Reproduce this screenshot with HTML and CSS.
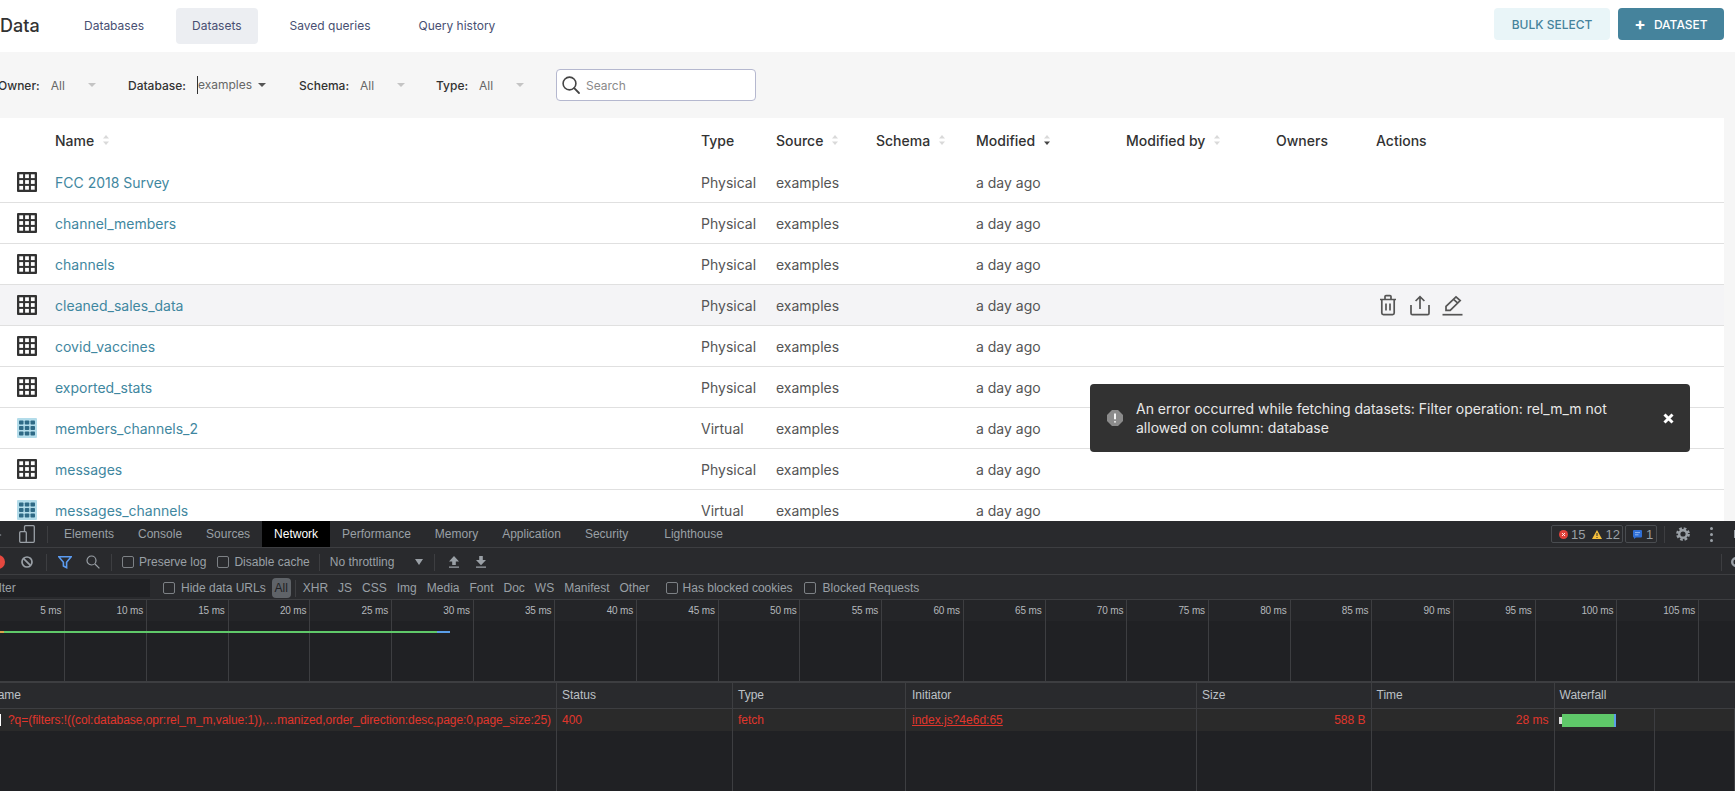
FILE: index.html
```html
<!DOCTYPE html>
<html lang="en">
<head>
<meta charset="utf-8">
<title>Datasets</title>
<link rel="stylesheet" href="styles.css">
</head>
<body>
<svg class="defs" aria-hidden="true">
  <symbol id="tbl" viewBox="0 0 20 20">
    <rect width="20" height="20" rx="1" fill="#323232"/>
    <g fill="#fff">
      <rect x="2.3" y="2.3" width="3.8" height="3.8"/><rect x="8.1" y="2.3" width="3.8" height="3.8"/><rect x="13.9" y="2.3" width="3.8" height="3.8"/>
      <rect x="2.3" y="8.1" width="3.8" height="3.8"/><rect x="8.1" y="8.1" width="3.8" height="3.8"/><rect x="13.9" y="8.1" width="3.8" height="3.8"/>
      <rect x="2.3" y="13.9" width="3.8" height="3.8"/><rect x="8.1" y="13.9" width="3.8" height="3.8"/><rect x="13.9" y="13.9" width="3.8" height="3.8"/>
    </g>
  </symbol>
  <symbol id="vtbl" viewBox="0 0 20 20">
    <rect width="20" height="20" rx="1" fill="#b3dcea"/>
    <g fill="#2f6a86">
      <rect x="2" y="2.5" width="4.5" height="4" rx=".8"/><rect x="7.8" y="2.5" width="4.5" height="4" rx=".8"/><rect x="13.5" y="2.5" width="4.5" height="4" rx=".8"/>
      <rect x="2" y="8" width="4.5" height="4" rx=".8"/><rect x="7.8" y="8" width="4.5" height="4" rx=".8"/><rect x="13.5" y="8" width="4.5" height="4" rx=".8"/>
      <rect x="2" y="13.5" width="4.5" height="4" rx=".8"/><rect x="7.8" y="13.5" width="4.5" height="4" rx=".8"/><rect x="13.5" y="13.5" width="4.5" height="4" rx=".8"/>
    </g>
  </symbol>
  <symbol id="sort" viewBox="0 0 8 12">
    <path d="M4 1 7 4.6H1Z" fill="#d9d9d9"/><path d="M4 11 7 7.4H1Z" fill="#d9d9d9"/>
  </symbol>
  <symbol id="sortdown" viewBox="0 0 8 12">
    <path d="M4 1 7 4.6H1Z" fill="#d9d9d9"/><path d="M4 11 7 7.4H1Z" fill="#444"/>
  </symbol>
</svg>

<div class="page">
  <main class="app">
    <header class="topbar">
      <h1 class="brand">Data</h1>
      <nav class="tabs">
        <a class="tab">Databases</a>
        <a class="tab tab-active">Datasets</a>
        <a class="tab">Saved queries</a>
        <a class="tab">Query history</a>
      </nav>
      <div class="actions-top">
        <button class="btn btn-light">BULK SELECT</button>
        <button class="btn btn-primary"><span class="plus">+</span>DATASET</button>
      </div>
    </header>

    <section class="filters">
      <div class="filter"><span class="f-label">Owner:</span><span class="f-val f-muted">All</span><i class="caret caret-light"></i></div>
      <div class="filter"><span class="f-label">Database:</span><span class="f-val f-wide">examples</span><i class="caret"></i></div>
      <div class="filter"><span class="f-label">Schema:</span><span class="f-val f-muted">All</span><i class="caret caret-light"></i></div>
      <div class="filter"><span class="f-label">Type:</span><span class="f-val f-muted">All</span><i class="caret caret-light"></i></div>
      <label class="search">
        <svg class="search-ico" viewBox="0 0 20 20" width="20" height="20"><circle cx="8.5" cy="8.5" r="6.4" fill="none" stroke="#444" stroke-width="1.6"/><path d="M13.2 13.2 18 18" stroke="#444" stroke-width="1.8" stroke-linecap="round"/></svg>
        <span class="search-ph">Search</span>
      </label>
    </section>

    <section class="table">
      <div class="row row-head">
        <span></span>
        <span class="th">Name<svg class="sort" width="8" height="12"><use href="#sort"/></svg></span>
        <span class="th">Type</span>
        <span class="th">Source<svg class="sort" width="8" height="12"><use href="#sort"/></svg></span>
        <span class="th">Schema<svg class="sort" width="8" height="12"><use href="#sort"/></svg></span>
        <span class="th">Modified<svg class="sort" width="8" height="12"><use href="#sortdown"/></svg></span>
        <span class="th">Modified by<svg class="sort" width="8" height="12"><use href="#sort"/></svg></span>
        <span class="th">Owners</span>
        <span class="th">Actions</span>
      </div>
      <div class="row"><svg class="ti" width="20" height="20"><use href="#tbl"/></svg><a class="link">FCC 2018 Survey</a><span>Physical</span><span>examples</span><span></span><span>a day ago</span><span></span><span></span><span></span></div>
      <div class="row"><svg class="ti" width="20" height="20"><use href="#tbl"/></svg><a class="link">channel_members</a><span>Physical</span><span>examples</span><span></span><span>a day ago</span><span></span><span></span><span></span></div>
      <div class="row"><svg class="ti" width="20" height="20"><use href="#tbl"/></svg><a class="link">channels</a><span>Physical</span><span>examples</span><span></span><span>a day ago</span><span></span><span></span><span></span></div>
      <div class="row row-hover"><svg class="ti" width="20" height="20"><use href="#tbl"/></svg><a class="link">cleaned_sales_data</a><span>Physical</span><span>examples</span><span></span><span>a day ago</span><span></span><span></span>
        <span class="row-actions">
          <svg width="20" height="22" viewBox="0 0 20 22" fill="none" stroke="#555" stroke-width="1.7"><path d="M2 5.5H18M7 5.2V2.6C7 2 7.4 1.7 8 1.7H12C12.6 1.7 13 2 13 2.6V5.2M3.8 5.5V19C3.8 20 4.5 20.6 5.4 20.6H14.6C15.5 20.6 16.2 20 16.2 19V5.5"/><path d="M8 9.5V16.5M12 9.5V16.5"/></svg>
          <svg width="20" height="21" viewBox="0 0 20 21" fill="none" stroke="#555" stroke-width="1.7"><path d="M10 14V2M5.6 6 10 1.6 14.4 6"/><path d="M1 10V18.2C1 19 1.6 19.6 2.4 19.6H17.6C18.4 19.6 19 19 19 18.2V10"/></svg>
          <svg width="21" height="21" viewBox="0 0 21 21" fill="none" stroke="#555" stroke-width="1.7"><path d="M14 1.8 18.2 5.6 8.2 15.4H4V11.4ZM11.6 4.4 15.8 8.2"/><path d="M.5 19.7H20.5"/></svg>
        </span>
      </div>
      <div class="row"><svg class="ti" width="20" height="20"><use href="#tbl"/></svg><a class="link">covid_vaccines</a><span>Physical</span><span>examples</span><span></span><span>a day ago</span><span></span><span></span><span></span></div>
      <div class="row"><svg class="ti" width="20" height="20"><use href="#tbl"/></svg><a class="link">exported_stats</a><span>Physical</span><span>examples</span><span></span><span>a day ago</span><span></span><span></span><span></span></div>
      <div class="row"><svg class="ti" width="20" height="20"><use href="#vtbl"/></svg><a class="link">members_channels_2</a><span>Virtual</span><span>examples</span><span></span><span>a day ago</span><span></span><span></span><span></span></div>
      <div class="row"><svg class="ti" width="20" height="20"><use href="#tbl"/></svg><a class="link">messages</a><span>Physical</span><span>examples</span><span></span><span>a day ago</span><span></span><span></span><span></span></div>
      <div class="row"><svg class="ti" width="20" height="20"><use href="#vtbl"/></svg><a class="link">messages_channels</a><span>Virtual</span><span>examples</span><span></span><span>a day ago</span><span></span><span></span><span></span></div>
    </section>

    <div class="toast">
      <svg class="toast-ico" width="16" height="16" viewBox="0 0 16 16"><path d="M5 0H11L16 5V11L11 16H5L0 11V5Z" fill="#8b8b8b"/><path d="M8 3.6V9.2M8 11.2V12.6" stroke="#fff" stroke-width="1.8"/></svg>
      <p class="toast-text">An error occurred while fetching datasets: Filter operation: rel_m_m not allowed on column: database</p>
      <svg class="toast-x" width="11" height="11" viewBox="0 0 11 11"><path d="M1.5 1.5 9.5 9.5M9.5 1.5 1.5 9.5" stroke="#fff" stroke-width="3"/></svg>
    </div>
  </main>

  <section class="devtools">
    <div class="dt-tabs">
      <svg class="dt-inspect" width="12" height="16" viewBox="0 0 12 16" fill="none" stroke="#9aa0a6" stroke-width="1.4"><path d="M-6 2H5M5 2V5"/><path d="M-1 6 6 9 3.4 10.4 5 13" fill="#9aa0a6"/></svg>
      <svg class="dt-device" width="16" height="18" viewBox="0 0 16 18" fill="none" stroke="#9aa0a6" stroke-width="1.3"><rect x="5.5" y=".7" width="9.8" height="16.6" rx="1"/><rect x=".7" y="6.7" width="6.6" height="10.6" rx="1" fill="#292a2d"/></svg>
      <i class="dt-sep"></i>
      <span class="dt-tab dt-elements">Elements</span>
      <span class="dt-tab">Console</span>
      <span class="dt-tab">Sources</span>
      <span class="dt-tab dt-tab-active">Network</span>
      <span class="dt-tab">Performance</span>
      <span class="dt-tab">Memory</span>
      <span class="dt-tab">Application</span>
      <span class="dt-tab">Security</span>
      <span class="dt-tab dt-lighthouse">Lighthouse</span>
      <span class="dt-right">
        <span class="badge badge-issues">
          <svg width="9" height="9" viewBox="0 0 9 9"><circle cx="4.5" cy="4.5" r="4.5" fill="#e0413a"/><path d="M3 3 6 6M6 3 3 6" stroke="#fff" stroke-width=".9"/></svg><b class="b-num">15</b>
          <svg class="b-warn" width="10" height="9" viewBox="0 0 10 9"><path d="M5 0 10 9H0Z" fill="#f6bf3c"/><path d="M5 3V6M5 7V8" stroke="#292a2d"/></svg><b class="b-num">12</b>
        </span>
        <span class="badge badge-msg">
          <svg width="9" height="9" viewBox="0 0 9 9"><path d="M1 0H8A1 1 0 0 1 9 1V6.5A1 1 0 0 1 8 7.5H3L1 9V7.5A1 1 0 0 1 0 6.5V1A1 1 0 0 1 1 0Z" fill="#2f6fd6"/><path d="M2 2.6H7M2 4.8H5.5" stroke="#a9c6f5" stroke-width=".8"/></svg><b class="b-num">1</b>
        </span>
        <i class="dt-sep dt-sep-r"></i>
        <svg class="gear" width="14" height="14" viewBox="0 0 14 14"><circle cx="7" cy="7" r="3.8" fill="none" stroke="#9aa0a6" stroke-width="2.4"/><circle cx="7" cy="7" r="5.6" fill="none" stroke="#9aa0a6" stroke-width="2.6" stroke-dasharray="2.6 1.8"/></svg>
        <span class="dots"><i></i><i></i><i></i></span>
        <i class="dt-close"></i>
      </span>
    </div>

    <div class="dt-toolbar">
      <i class="rec"></i>
      <svg class="stop" width="12" height="12" viewBox="0 0 12 12" fill="none" stroke="#9aa0a6" stroke-width="1.7"><circle cx="6" cy="6" r="5"/><path d="M2.6 2.6 9.4 9.4"/></svg>
      <i class="dt-sep sep-a"></i>
      <svg class="funnel" width="14" height="13" viewBox="0 0 14 13"><path d="M.8.8H13.2L8.6 6.2V11.6L5.4 10V6.2Z" fill="none" stroke="#5b9bf0" stroke-width="1.6"/></svg>
      <svg class="mag" width="14" height="14" viewBox="0 0 14 14" fill="none" stroke="#9aa0a6" stroke-width="1.2"><circle cx="5.5" cy="5.5" r="4.5"/><path d="M9 9 13.4 13.4"/></svg>
      <i class="dt-sep sep-b"></i>
      <i class="cb cb-a"></i><span class="t-preserve">Preserve log</span>
      <i class="cb cb-b"></i><span class="t-disable">Disable cache</span>
      <i class="dt-sep sep-c"></i>
      <span class="t-throttle">No throttling</span>
      <i class="dt-caret"></i>
      <i class="dt-sep sep-d"></i>
      <svg class="arr arr-up" width="10" height="12" viewBox="0 0 10 12" fill="#9aa0a6"><path d="M5 0 10 5.4H6.8V9H3.2V5.4H0ZM0 10.4H10V11.8H0Z"/></svg>
      <svg class="arr arr-down" width="10" height="12" viewBox="0 0 10 12" fill="#9aa0a6"><path d="M3.2 0H6.8V4H10L5 9.2 0 4H3.2ZM0 10.4H10V11.8H0Z"/></svg>
      <span class="dt-far"><i class="dt-sep"></i><svg class="gear gear-s" width="14" height="14" viewBox="0 0 14 14"><circle cx="7" cy="7" r="3.8" fill="none" stroke="#9aa0a6" stroke-width="2.4"/></svg></span>
    </div>

    <div class="dt-filter">
      <span class="filter-input">Filter</span>
      <i class="cb cb-c"></i><span class="t-hide">Hide data URLs</span>
      <span class="pill">All</span>
      <i class="dt-sep sep-e"></i>
      <span class="ft">XHR</span><span class="ft">JS</span><span class="ft">CSS</span><span class="ft">Img</span><span class="ft">Media</span><span class="ft">Font</span><span class="ft">Doc</span><span class="ft">WS</span><span class="ft">Manifest</span><span class="ft">Other</span>
      <i class="cb cb-d"></i><span class="t-cookies">Has blocked cookies</span>
      <i class="cb cb-e"></i><span>Blocked Requests</span>
    </div>

    <div class="timeline">
      <div class="tl-cell">5 ms</div><div class="tl-cell">10 ms</div><div class="tl-cell">15 ms</div><div class="tl-cell">20 ms</div><div class="tl-cell">25 ms</div><div class="tl-cell">30 ms</div><div class="tl-cell">35 ms</div>
      <div class="tl-cell">40 ms</div><div class="tl-cell">45 ms</div><div class="tl-cell">50 ms</div><div class="tl-cell">55 ms</div><div class="tl-cell">60 ms</div><div class="tl-cell">65 ms</div><div class="tl-cell">70 ms</div>
      <div class="tl-cell">75 ms</div><div class="tl-cell">80 ms</div><div class="tl-cell">85 ms</div><div class="tl-cell">90 ms</div><div class="tl-cell">95 ms</div><div class="tl-cell">100 ms</div><div class="tl-cell">105 ms</div>
      <div class="tl-bar"><i class="tl-orange"></i><i class="tl-green"></i><i class="tl-blue"></i></div>
    </div>

    <div class="net">
      <div class="net-row net-head">
        <span class="nc nc-first">Name</span><span class="nc">Status</span><span class="nc">Type</span><span class="nc nc-init">Initiator</span><span class="nc">Size</span><span class="nc">Time</span><span class="nc nc-span">Waterfall</span>
      </div>
      <div class="net-row net-data">
        <span class="nc nc-name"><i class="file"></i>?q=(filters:!((col:database,opr:rel_m_m,value:1)),…manized,order_direction:desc,page:0,page_size:25)</span>
        <span class="nc">400</span><span class="nc">fetch</span><span class="nc nc-init"><u>index.js?4e6d:65</u></span>
        <span class="nc nc-r">588 B</span><span class="nc nc-r">28 ms</span>
        <span class="nc nc-fall"><i class="w-wait"></i><i class="w-green"></i><i class="w-blue"></i></span>
        <span class="nc"></span>
      </div>
      <div class="net-row net-rest">
        <span class="nc"></span><span class="nc"></span><span class="nc"></span><span class="nc"></span><span class="nc"></span><span class="nc"></span><span class="nc"></span><span class="nc"></span>
      </div>
    </div>
  </section>
</div>
</body>
</html>
```

FILE: styles.css
```css
* { box-sizing: border-box; }
html, body { margin: 0; padding: 0; height: 100%; overflow: hidden; }
body { font-family: Inter, "Liberation Sans", sans-serif; color: #323232; background: #f6f6f6; }
i { display: block; font-style: normal; }
.defs { width: 0; height: 0; position: absolute; }
.page { width: 1735px; height: 791px; display: flex; flex-direction: column; overflow: hidden; }
.app { position: relative; height: 521px; flex: none; overflow: hidden; background: #f6f6f6; }

/* top bar */
.topbar { height: 52px; background: #fff; display: flex; align-items: flex-start; padding-right: 11px; }
.brand { margin: 0; width: 68px; flex: none; font-size: 18px; font-weight: 500; line-height: 52px; color: #323232; }
.tabs { display: flex; gap: 16px; padding-top: 8px; }
.tab { height: 36px; line-height: 35px; padding: 0 16px; font-size: 12px; color: #484f72; border-radius: 4px; }
.tab-active { background: #eceef2; }
.actions-top { margin-left: auto; padding-top: 8px; display: flex; gap: 8px; }
.btn { height: 32px; border: 0; border-radius: 4px; font: 500 12px Inter, "Liberation Sans", sans-serif; display: flex; align-items: center; justify-content: center; padding: 0; }
.btn-light { width: 116px; background: #e9f5f8; color: #45839c; }
.btn-primary { width: 106px; background: #45839c; color: #fff; }
.plus { font-size: 17px; font-weight: 700; margin-right: 8px; line-height: 1; }

/* filters */
.filters { height: 66px; display: grid; grid-template-columns: 128px 171px 137px 120px 200px; align-items: center; }
.filter { display: flex; align-items: center; font-size: 12px; }
.filter:first-child { margin-left: -2px; }
.f-label { font-weight: 500; color: #323232; margin-right: 11px; }
.f-val { width: 37px; color: #666; }
.f-wide { width: 61px; color: #666; border-left: 1px solid #323232; line-height: 18px; }
.caret { width: 0; height: 0; border: 4px solid transparent; border-top: 4px solid #555; border-bottom: 0; }
.caret-light { border-top-color: #c4c4c4; }
.search { height: 32px; width: 200px; border: 1px solid #b5b8cf; border-radius: 4px; background: #fff; display: flex; align-items: center; padding-left: 4px; }
.search-ph { font-size: 12px; color: #8a8a8a; margin-left: 5px; }

/* table */
.table { width: 1724px; background: #fff; font-size: 14px; color: #555; }
.row { display: grid; grid-template-columns: 55px 646px 75px 100px 100px 150px 150px 100px 1fr; align-items: center; height: 41px; border-bottom: 1px solid #e0e0e0; background: #fff; }
.row-head { height: 44px; border-bottom: 0; }
.row-hover { background: #f4f4f6; }
.th { color: #323232; font-weight: 500; display: flex; align-items: center; }
.sort { margin-left: 8px; }
.ti { margin-left: 17px; }
.link { color: #3f87a0; }
.row-actions { display: flex; align-items: center; gap: 12px; margin-left: 2px; }

/* toast */
.toast { position: absolute; left: 1090px; top: 384px; width: 600px; height: 68px; border-radius: 4px; background: #323232; color: #fff; display: flex; align-items: center; padding: 0 17px; }
.toast-text { margin: 0; flex: 1; margin-left: 13px; font-size: 14px; line-height: 19px; color: #e8e8e8; padding-right: 20px; }
.toast-x { flex: none; margin-right: -1px; margin-top: 1px; }

/* devtools */
.devtools { height: 270px; flex: none; background: #292a2d; color: #9aa0a6; font-family: "Liberation Sans", Arial, sans-serif; font-size: 12px; display: flex; flex-direction: column; }
.dt-tabs { height: 27px; display: flex; align-items: center; border-bottom: 1px solid #3d3e41; }
.dt-inspect { margin-left: -6px; flex: none; }
.dt-device { margin-left: 13px; flex: none; }
.dt-sep { width: 1px; height: 17px; background: #3d3e41; flex: none; }
.dt-tabs > .dt-sep { margin-left: 12px; }
.dt-tab { height: 26px; line-height: 26px; padding: 0 12px; }
.dt-elements { margin-left: 4px; }
.dt-tab-active { background: #000; color: #fff; }
.dt-lighthouse { margin-left: 12px; }
.dt-right { margin-left: auto; display: flex; align-items: center; }
.badge { height: 18px; border: 1px solid #494c50; border-radius: 2px; display: flex; align-items: center; padding-left: 7px; }
.badge-issues { width: 72px; }
.badge-msg { width: 32px; margin-left: 2px; }
.b-num { font-weight: 400; font-size: 13px; margin-left: 3px; }
.badge-msg .b-num { margin-left: 4px; }
.b-warn { margin-left: 7px; }
.dt-sep-r { margin-left: 7px; }
.gear { margin-left: 11px; }
.dots { display: flex; flex-direction: column; gap: 3px; margin-left: 20px; }
.dots i { width: 3px; height: 3px; border-radius: 50%; background: #9aa0a6; }
.dt-close { width: 1px; height: 8px; background: #9aa0a6; margin-left: 21px; }

.dt-toolbar { height: 27px; padding-top: 2px; display: flex; align-items: center; border-bottom: 1px solid #3d3e41; }
.rec { width: 14px; height: 14px; border-radius: 50%; background: #e5483f; margin-left: -9px; flex: none; }
.stop { margin-left: 16px; }
.sep-a { margin-left: 13px; }
.funnel { margin-left: 11px; }
.mag { margin-left: 14px; }
.sep-b { margin-left: 11px; }
.cb { width: 12px; height: 12px; border: 1px solid #7d8185; border-radius: 2px; flex: none; }
.cb-a { margin-left: 10px; }
.t-preserve { margin-left: 5px; }
.cb-b { margin-left: 11px; }
.t-disable { margin-left: 5px; }
.sep-c { margin-left: 9px; }
.t-throttle { margin-left: 10px; }
.dt-caret { width: 0; height: 0; border: 4px solid transparent; border-top: 6px solid #9aa0a6; border-bottom: 0; margin-left: 21px; }
.sep-d { margin-left: 11px; }
.arr-up { margin-left: 14px; }
.arr-down { margin-left: 17px; }
.dt-far { margin-left: auto; display: flex; align-items: center; margin-right: -8px; }
.gear-s { margin-left: 7px; }

.dt-filter { height: 25px; padding-top: 2px; display: flex; align-items: center; border-bottom: 1px solid #3d3e41; }
.filter-input { width: 150px; height: 18px; line-height: 18px; background: #202124; text-indent: -11px; color: #9aa0a6; flex: none; }
.cb-c { margin-left: 13px; }
.t-hide { margin-left: 6px; }
.pill { width: 19px; height: 20px; line-height: 20px; text-align: center; border-radius: 4px; background: #5f6368; color: #202124; margin-left: 6px; }
.sep-e { margin-left: 4px; }
.ft { margin-left: 10px; }
.sep-e + .ft { margin-left: 7px; }
.cb-d { margin-left: 16px; }
.t-cookies { margin-left: 5px; }
.cb-e { margin-left: 11px; }
.cb-e + span { margin-left: 7px; }

.timeline { position: relative; height: 83px; flex: none; display: grid; grid-template-columns: repeat(21, 81.7px); margin-left: -16.4px; width: 1751.4px; background: linear-gradient(#242528 0, #242528 21px, #202124 21px); border-bottom: 2px solid #3d3e41; }
.tl-cell { border-right: 1px solid #3d3e41; text-align: right; padding: 5px 3px 0 0; font-size: 10px; letter-spacing: -.15px; color: #b4b8bc; }
.tl-bar { position: absolute; left: 16.4px; top: 31px; height: 2px; display: flex; }
.tl-orange { width: 4px; background: #d9a24a; }
.tl-green { width: 433px; background: #5fc869; }
.tl-blue { width: 13px; background: #5a9ee8; }

.net { flex: 1; display: flex; flex-direction: column; background: #202124; min-height: 0; }
.net-row { display: grid; grid-template-columns: 557px 176px 173px 291px 174.5px 183px 100px 1fr; }
.nc { border-right: 1px solid #3d3e41; padding: 0 5px; white-space: nowrap; overflow: hidden; }
.nc-init { padding-left: 6px; }
.net-head { height: 26px; line-height: 25px; background: #292a2d; border-bottom: 1px solid #3d3e41; color: #bdc1c6; }
.nc-first { padding-left: 0; text-indent: -11px; overflow: hidden; }
.nc-span { grid-column: span 2; border-right: 0; }
.net-data { height: 22px; line-height: 22px; background: #2a2a2a; color: #e0362c; }
.nc-name { display: flex; align-items: center; padding-left: 0; letter-spacing: -.05px; }
.file { width: 1px; height: 12px; background: #fff; margin-right: 7px; flex: none; }
.nc-r { text-align: right; }
.nc-fall { display: flex; align-items: center; padding: 0 0 0 4px; }
.w-wait { width: 3px; height: 7px; background: #ddd; }
.w-green { width: 52px; height: 13px; background: #5fc869; }
.w-blue { width: 2px; height: 13px; background: #5a9ee8; }
.net-rest { flex: 1; }
```
